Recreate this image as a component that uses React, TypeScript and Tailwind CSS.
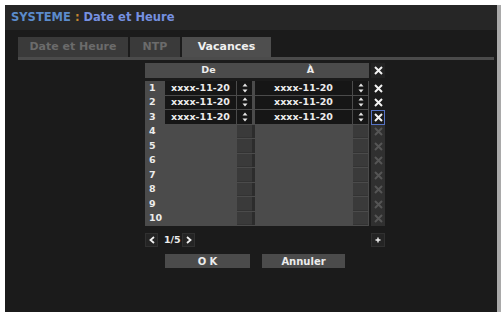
const font = "font-['DejaVu_Sans','Liberation_Sans',Arial,sans-serif]";

const rows = Array.from({ length: 10 }, (_, i) => i + 1);

function Spin() {
  return (
    <svg width="6" height="10" viewBox="0 0 6 10">
      <path d="M3 0.5 L5.5 3.5 L0.5 3.5 Z" fill="#e6e6e6" />
      <path d="M3 9.5 L5.5 6.5 L0.5 6.5 Z" fill="#e6e6e6" />
    </svg>
  );
}

function Cross({ color }: { color: string }) {
  return (
    <svg width="9" height="9" viewBox="0 0 9 9">
      <path d="M1 1 L8 8 M8 1 L1 8" stroke={color} strokeWidth="2" />
    </svg>
  );
}

export default function App() {
  return (
    <div className={`w-[501px] h-[315px] bg-white pt-[5px] pl-[5px] pb-[3px] ${font}`}>
      <div className="h-full flex flex-col bg-[#1b1b1b] border-r-[4px] border-[#a9a9a9]">
        {/* title */}
        <div className="h-[25px] bg-[#262626] flex items-center pl-[6px] text-[11.5px] font-bold">
          <span className="text-[#5b8bcb]">SYSTEME</span>
          <span className="text-[#c8862e] mx-[4px]">:</span>
          <span className="text-[#7590e0]">Date et Heure</span>
        </div>

        {/* tabs */}
        <div className="mt-[7px] ml-[13px] mr-[3px] flex gap-[2px] h-[20px] text-[11px] font-bold">
          <div className="w-[110px] bg-[#3a3a3a] text-[#6b6b6b] flex items-center justify-center">
            Date et Heure
          </div>
          <div className="w-[50px] bg-[#3a3a3a] text-[#6b6b6b] flex items-center justify-center">NTP</div>
          <div className="w-[89px] bg-[#4e4e4e] text-[#f0f0f0] flex items-center justify-center">
            Vacances
          </div>
        </div>
        <div className="ml-[13px] mr-[3px] h-[3px] bg-[#4b4b4b]" />

        {/* table */}
        <div className="ml-[140px] mt-[3px] w-[240px] flex flex-col text-[9.5px] font-bold text-[#ececec]">
          <div className="flex h-[15px]">
            <div className="w-[224px] bg-[#4b4b4b] flex items-center">
              <div className="w-[20px]" />
              <div className="w-[87px] text-center">De</div>
              <div className="w-[117px] text-center">À</div>
            </div>
            <div className="ml-[2px] w-[14px] bg-[#222222] flex items-center justify-center">
              <Cross color="#f2f2f2" />
            </div>
          </div>

          <div className="mt-[3px] flex flex-col">
            {rows.map((n) => {
              const filled = n <= 3;
              return (
                <div key={n} className="flex h-[14.5px]">
                  <div className="w-[224px] bg-[#4b4b4b] flex pb-[1px]">
                    <div className="w-[20px] pl-[4px] flex items-center">{n}</div>
                    {filled ? (
                      <>
                        <div className="w-[71px] bg-[#161616] flex items-center justify-center">xxxx-11-20</div>
                        <div className="ml-[1px] w-[15px] bg-[#161616] flex items-center justify-center">
                          <Spin />
                        </div>
                        <div className="w-[3px]" />
                        <div className="w-[97px] bg-[#161616] flex items-center justify-center">xxxx-11-20</div>
                        <div className="ml-[1px] w-[15px] bg-[#161616] flex items-center justify-center">
                          <Spin />
                        </div>
                      </>
                    ) : (
                      <>
                        <div className="w-[72px]" />
                        <div className="w-[15px] bg-[#3a3a3a] border-b border-[#333333]" />
                        <div className="w-[3px] bg-[#2c2c2c]" />
                        <div className="w-[97px]" />
                        <div className="ml-[1px] w-[15px] bg-[#3a3a3a] border-b border-[#333333]" />
                      </>
                    )}
                  </div>
                  {filled ? (
                    <div
                      className={`ml-[2px] w-[14px] flex items-center justify-center ${
                        n === 3 ? "border border-[#5673c4]" : ""
                      }`}
                    >
                      <Cross color="#f2f2f2" />
                    </div>
                  ) : (
                    <div className="ml-[2px] w-[14px] bg-[#303030] flex items-center justify-center">
                      <Cross color="#555555" />
                    </div>
                  )}
                </div>
              );
            })}
          </div>

          {/* pager */}
          <div className="mt-[7px] h-[14px] flex items-center">
            <div className="w-[13px] h-[14px] bg-[#242424] border border-[#303030] flex items-center justify-center">
              <svg width="6" height="8" viewBox="0 0 6 8">
                <path d="M5 1 L1.5 4 L5 7" stroke="#f0f0f0" strokeWidth="1.8" fill="none" />
              </svg>
            </div>
            <span className="ml-[6px] w-[18px]">1/5</span>
            <div className="w-[13px] h-[14px] bg-[#242424] border border-[#303030] flex items-center justify-center">
              <svg width="6" height="8" viewBox="0 0 6 8">
                <path d="M1 1 L4.5 4 L1 7" stroke="#f0f0f0" strokeWidth="1.8" fill="none" />
              </svg>
            </div>
            <div className="ml-auto w-[14px] h-[14px] bg-[#242424] border border-[#303030] flex items-center justify-center">
              <svg width="6" height="6" viewBox="0 0 6 6">
                <path d="M3 0.5 V5.5 M0.5 3 H5.5" stroke="#f0f0f0" strokeWidth="1.4" />
              </svg>
            </div>
          </div>

          {/* buttons */}
          <div className="mt-[7px] ml-[20px] flex gap-[12px] h-[14px] text-[10px]">
            <div className="w-[85px] bg-[#4b4b4b] flex items-center justify-center">O K</div>
            <div className="w-[83px] bg-[#4b4b4b] flex items-center justify-center">Annuler</div>
          </div>
        </div>
      </div>
    </div>
  );
}
